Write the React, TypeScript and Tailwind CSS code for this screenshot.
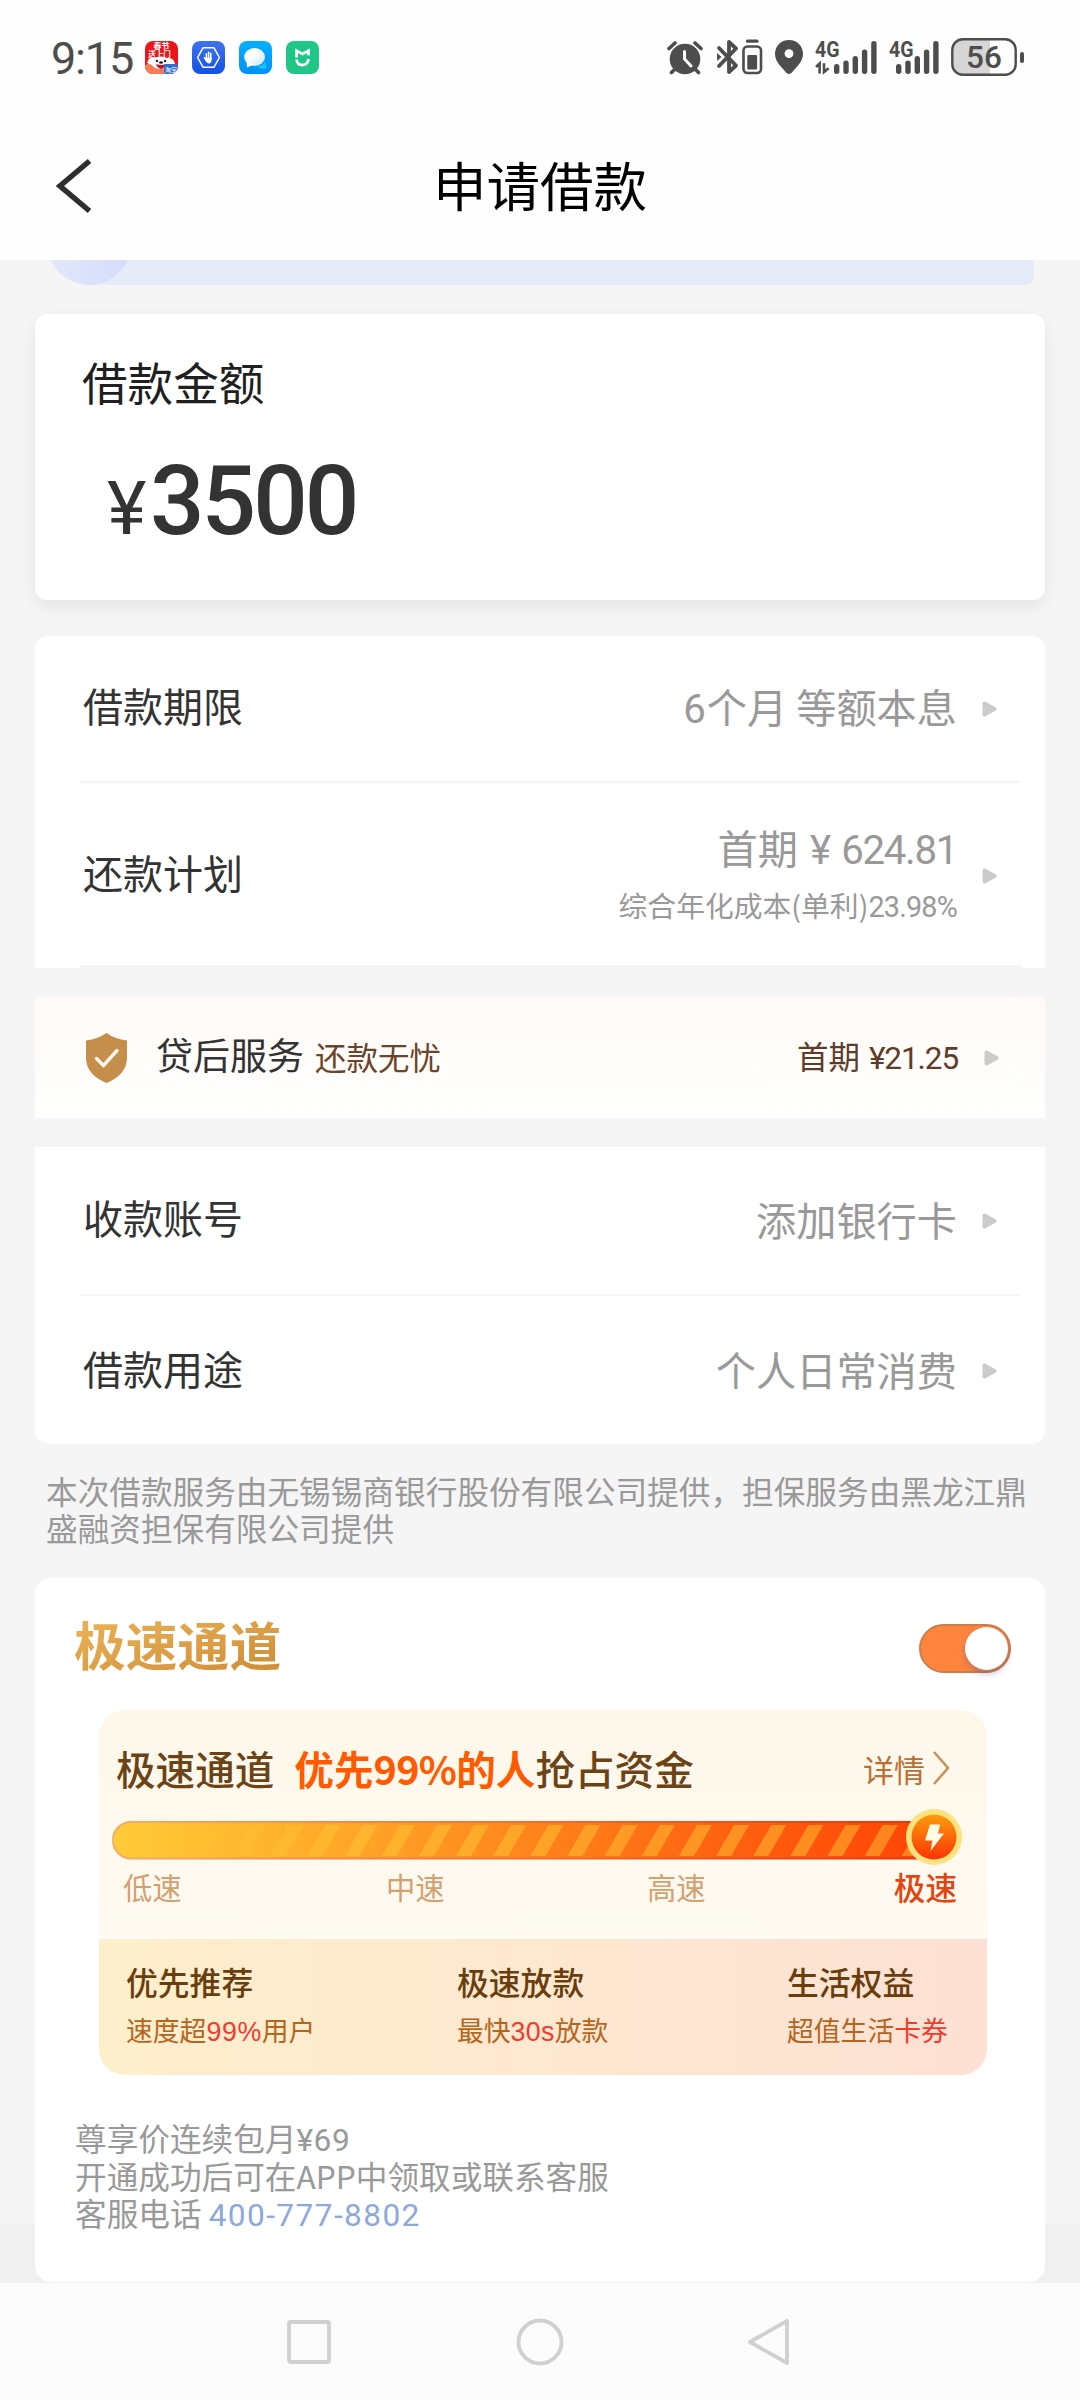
import type { ReactNode } from "react"

const DARK = "#4d4d4d"

function AppIcons() {
  return (
    <div className="flex gap-[14px]">
      <svg className="size-[33px] rounded-[8px]" viewBox="0 0 33 33">
        <rect width="33" height="33" fill="#ea1519" />
        <text x="16.5" y="8.4" fontSize="8" fontWeight="700" textAnchor="middle" fill="#fff">春节</text>
        <text x="14.5" y="15.6" fontSize="7.5" fontWeight="700" textAnchor="middle" fill="#fff">送上门</text>
        <path d="M0 24 Q10 20 20 27 L20 33 H0Z" fill="#f77b55" />
        <path d="M2 22 Q4 15 10 17 Q16 14 22 17 Q29 16 30 23 L26 24 Q23 28 16 28 Q9 28 7 24Z" fill="#fff" />
        <circle cx="12" cy="20" r="1.2" fill="#222" />
        <circle cx="20" cy="20" r="1.2" fill="#222" />
        <ellipse cx="16" cy="21.5" rx="2" ry="1.3" fill="#222" />
        <path d="M11 23 Q16 25 21 23 Q19 28 16 28 Q12 27 11 23Z" fill="#c8102a" />
        <rect x="19" y="23" width="14" height="10" rx="2" fill="#2f6fd0" />
        <text x="26" y="30.6" fontSize="6" textAnchor="middle" fill="#fff">淘宝</text>
      </svg>
      <svg className="size-[33px] rounded-[8px]" viewBox="0 0 33 33">
        <defs>
          <linearGradient id="guard" x1="0" y1="0" x2="0" y2="1">
            <stop offset="0" stopColor="#3f74ef" />
            <stop offset="1" stopColor="#1550e6" />
          </linearGradient>
        </defs>
        <rect width="33" height="33" fill="url(#guard)" />
        <path d="M11 6.8H22L27.4 16.5L22 26.2H11L5.6 16.5Z" fill="none" stroke="#fff" strokeWidth="1.5" strokeLinejoin="round" />
        <path d="M12.3 16.8 L15 20 M14.4 18V12.8 M16.6 18V11.4 M18.8 18V12.4" stroke="#fff" strokeWidth="1.6" strokeLinecap="round" />
        <path d="M13.6 17H19.6V19Q19.6 22.4 16.8 22.4Q15 22.4 13.2 19.6Z" fill="#fff" />
      </svg>
      <svg className="size-[33px] rounded-[8px]" viewBox="0 0 33 33">
        <defs>
          <linearGradient id="msg" x1="0" y1="0" x2="0" y2="1">
            <stop offset="0" stopColor="#05b0ff" />
            <stop offset="1" stopColor="#0091f7" />
          </linearGradient>
          <linearGradient id="bubble" x1="0" y1="0" x2="1" y2="1">
            <stop offset="0.4" stopColor="#fff" />
            <stop offset="1" stopColor="#bfe6ff" />
          </linearGradient>
        </defs>
        <rect width="33" height="33" fill="url(#msg)" />
        <path d="M18 25Q24 26 26 20L27.5 27.5H21Z" fill="#19c3f5" />
        <ellipse cx="15.6" cy="16" rx="10.4" ry="9" fill="url(#bubble)" />
        <path d="M7.5 20 L8 26.5 L14 24Z" fill="#fff" />
      </svg>
      <svg className="size-[33px] rounded-[8px]" viewBox="0 0 33 33">
        <rect width="33" height="33" fill="#1fc686" />
        <path d="M10.6 16.4V9.8L16.5 13L22.4 9.8V14.2" fill="none" stroke="#fff" strokeWidth="2.8" strokeLinejoin="miter" />
        <path d="M10.6 18.5Q11 24 16.5 24Q22 24 22.4 18" fill="none" stroke="#fff" strokeWidth="2.8" />
      </svg>
    </div>
  )
}

function Signal({ data }: { data?: boolean }) {
  const x = data ? [19, 28.3, 37.6, 46.9, 56.2] : [7, 16.3, 25.6, 34.9, 44.2]
  const h = [10, 13.5, 18, 24.5, 33]
  return (
    <svg width={data ? 62 : 50} height="34" viewBox={data ? "0 0 62 34" : "0 0 50 34"} className="overflow-visible font-['Roboto',sans-serif]">
      <text x="0" y="16.8" fontSize="22" fontWeight="700" textLength="24.5" lengthAdjust="spacingAndGlyphs" fill={DARK}>
        4G
      </text>
      {data && (
        <path d="M1 27L4.6 23.6V33.5M9 23.2V32L13.6 28.2" fill="none" stroke={DARK} strokeWidth="2.6" />
      )}
      {h.map((v, i) => (
        <rect key={i} x={x[i]} y={34 - v} width="5.4" height={v} rx="2.7" fill={DARK} />
      ))}
    </svg>
  )
}

function StatusBar() {
  return (
    <div className="flex h-[114px] items-center pr-[55px] pl-[51px]">
      <span className="mt-[2px] w-[94px] font-['Roboto',sans-serif] text-[45px] leading-none tracking-[-1.2px] text-[#4d4d4d]">
        9:15
      </span>
      <AppIcons />
      <div className="ml-auto flex items-center">
        <svg width="36" height="35" viewBox="0 0 36 35" className="mr-[12px]">
          <circle cx="18" cy="19" r="15.3" fill={DARK} />
          <path d="M2 8.5L8 3M34 8.5L28 3M8 29L4.5 32.5M28 29L31.5 32.5" stroke={DARK} strokeWidth="3.6" strokeLinecap="round" />
          <path d="M17.5 11.5V19L24 26" fill="none" stroke="#fff" strokeWidth="3" strokeLinecap="round" />
        </svg>
        <svg width="48" height="36" viewBox="0 0 48 36" className="mr-[12px]">
          <path d="M4 9L21 26.5L14 33V3L21 9.5L4 27" fill="none" stroke={DARK} strokeWidth="3.8" strokeLinejoin="round" strokeLinecap="round" />
          <path d="M2 14L6.5 18L2 22Z" fill={DARK} />
          <rect x="28.5" y="7.5" width="17.5" height="26.5" rx="4" fill="none" stroke={DARK} strokeWidth="2.6" />
          <rect x="32.3" y="16" width="9.8" height="14.5" rx="1" fill={DARK} />
          <path d="M32.5 2.2H42" stroke={DARK} strokeWidth="3.2" strokeLinecap="round" />
        </svg>
        <svg width="28" height="34" viewBox="0 0 28 34" className="mr-[12px]">
          <path d="M14 0C6 0 0 6 0 14C0 22 7 27 10.5 32Q14 36 17.5 32C21 27 28 22 28 14C28 6 22 0 14 0Z" fill={DARK} />
          <circle cx="14" cy="13.6" r="4.4" fill="#fff" />
        </svg>
        <div className="mr-[12px]"><Signal data /></div>
        <div className="mr-[12px]"><Signal /></div>
        <svg width="74" height="38" viewBox="0 0 74 38" className="overflow-visible font-['Roboto',sans-serif]">
          <path d="M12 2H39V36H12Q2 36 2 26V12Q2 2 12 2Z" fill="#d6d6d6" />
          <rect x="1.3" y="1.3" width="63.4" height="35.4" rx="10.5" fill="none" stroke={DARK} strokeWidth="2.4" />
          <rect x="69" y="14" width="4" height="11" rx="2" fill={DARK} />
          <text x="33" y="30.3" fontSize="31.5" fontWeight="500" textAnchor="middle" fill={DARK}>56</text>
        </svg>
      </div>
    </div>
  )
}

function Header() {
  return (
    <div className="-mt-px grid h-[146px] grid-cols-[1fr_auto_1fr] items-center">
      <svg width="36" height="56" viewBox="0 0 36 56" className="ml-[56px]">
        <path d="M33.5 3L4 28L33.5 53" fill="none" stroke="#2e2e2e" strokeWidth="5.4" />
      </svg>
      <h1 className="-mt-[5px] text-[53.5px] leading-none text-black">申请借款</h1>
    </div>
  )
}

function Arrow() {
  return (
    <svg width="15" height="16" viewBox="0 0 15 16">
      <path d="M2.5 2.5L12.5 8L2.5 13.5Z" fill="#cbcbcb" stroke="#cbcbcb" strokeWidth="4" strokeLinejoin="round" />
    </svg>
  )
}

function Row({ label, children, className }: { label: string; children: ReactNode; className: string }) {
  return (
    <div className={`ml-[45px] mr-[24px] flex items-center pl-[3px] pr-[24px] ${className}`}>
      <span className="-mt-[7px] text-[40px] leading-none text-[#333]">{label}</span>
      <div className="-mt-[3px] mr-[25px] ml-auto text-right text-[40.2px] leading-none text-[#999]">{children}</div>
      <Arrow />
    </div>
  )
}

function SpeedBar() {
  const stripes = Array.from({ length: 20 }, (_, i) => 102 + i * 37.15)
  return (
    <svg width="852" height="58" viewBox="0 0 852 58" className="block">
      <defs>
        <linearGradient id="speed" gradientUnits="userSpaceOnUse" x1="0" y1="0" x2="820" y2="0">
          <stop offset="0" stopColor="#ffcb38" />
          <stop offset="0.25" stopColor="#ffac2a" />
          <stop offset="0.5" stopColor="#ff861c" />
          <stop offset="0.75" stopColor="#ff6110" />
          <stop offset="1" stopColor="#ff4406" />
        </linearGradient>
        <linearGradient id="edge" gradientUnits="userSpaceOnUse" x1="0" y1="0" x2="820" y2="0">
          <stop offset="0" stopColor="#efae6b" />
          <stop offset="0.5" stopColor="#f07035" />
          <stop offset="1" stopColor="#e53409" />
        </linearGradient>
        <linearGradient id="stripe" gradientUnits="userSpaceOnUse" x1="0" y1="0" x2="820" y2="0">
          <stop offset="0.08" stopColor="#ffcc38" stopOpacity="0" />
          <stop offset="0.3" stopColor="#ffbd30" stopOpacity="0.7" />
          <stop offset="1" stopColor="#ff9322" stopOpacity="0.8" />
        </linearGradient>
        <linearGradient id="disc" x1="0" y1="0" x2="0" y2="1">
          <stop offset="0" stopColor="#fb9d0b" />
          <stop offset="1" stopColor="#fb3305" />
        </linearGradient>
      </defs>
      <rect x="1" y="14" width="830" height="36.5" rx="18" fill="url(#speed)" stroke="url(#edge)" strokeWidth="2" />
      {stripes.map((x) => (
        <path key={x} d={`M${x} 17H${x + 15}L${x - 3} 48H${x - 18}Z`} fill="url(#stripe)" />
      ))}
      <circle cx="822" cy="29" r="28" fill="#fee27e" />
      <circle cx="822" cy="29" r="22.5" fill="url(#disc)" />
      <path d="M818 16.5H828L826 25.5H832L818.5 43L820.5 32.5H813Z" fill="#fffbe6" />
    </svg>
  )
}

function Benefit({ title, children }: { title: string; children: ReactNode }) {
  return (
    <div>
      <p className="text-[31.8px] leading-[46px] font-medium text-[#6a3e0c]">{title}</p>
      <p className="mt-[3px] text-[26.8px] leading-[46px] text-[#b5651d]">{children}</p>
    </div>
  )
}

function PromoCard() {
  return (
    <div className="mt-[37px] mr-[58px] ml-[64px] h-[365px] overflow-hidden rounded-[26px] bg-[#fff9ed]">
      <div className="h-[229px] bg-linear-to-b from-[#fef7ea] to-[#fffaf2] pt-[37px] pl-[13px]">
        <div className="flex h-[42px] items-center pl-[4px] text-[39.6px] leading-none font-medium text-[#6b4315]">
          <span className="mr-[20px]">极速通道</span>
          <span className="font-bold text-[#ff5a00]">
            优先<span className="tracking-[-0.7px]">99%</span>的人
          </span>
          <span>抢占资金</span>
          <span className="mr-[7px] ml-auto text-[31px] font-normal text-[#bb6f30]">详情</span>
          <svg width="18" height="36" viewBox="0 0 18 36" className="mr-[37px]">
            <path d="M2 2L16 18L2 34" fill="none" stroke="#cb9157" strokeWidth="2.6" />
          </svg>
        </div>
        <div className="mt-[19px]">
          <SpeedBar />
        </div>
        <div className="mt-[5px] grid h-[32px] grid-cols-[263px_261px_1fr_auto] items-center pr-[30px] pl-[11px] text-[29.3px] leading-none text-[#d3a06f]">
          <span>低速</span>
          <span>中速</span>
          <span>高速</span>
          <span className="text-[31.6px] font-medium text-[#e2450f]">极速</span>
        </div>
      </div>
      <div className="grid h-[136px] grid-cols-[331px_330px_1fr] bg-linear-to-r from-[#feefcc] to-[#fde1d4] pt-[19px] pl-[27px]">
        <Benefit title="优先推荐">
          速度超<span className="font-['Liberation_Sans',sans-serif] tracking-[0.6px] text-[#f23b2f]">99%</span>用户
        </Benefit>
        <Benefit title="极速放款">
          最快<span className="font-['Liberation_Sans',sans-serif] tracking-[0.3px] text-[#f23b2f]">30s</span>放款
        </Benefit>
        <Benefit title="生活权益">
          超值生活<span className="text-[#f23b2f]">卡券</span>
        </Benefit>
      </div>
    </div>
  )
}

function NavBar() {
  return (
    <div className="flex h-[117px] items-center justify-center gap-[184px] bg-[#fcfcfc]">
      <svg width="46" height="48" viewBox="0 0 46 48" fill="none" stroke="#d0d0d0" strokeWidth="3.8">
        <rect x="3" y="4" width="40" height="40" rx="1.5" />
      </svg>
      <svg width="48" height="48" viewBox="0 0 48 48" fill="none" stroke="#d0d0d0" strokeWidth="3.8">
        <circle cx="24" cy="24" r="21.5" />
      </svg>
      <svg width="46" height="48" viewBox="0 0 46 48" fill="none" stroke="#d0d0d0" strokeWidth="3.8">
        <path d="M39 3V45L2 24Z" strokeLinejoin="round" />
      </svg>
    </div>
  )
}

export default function App() {
  return (
    <div className="h-[2400px] w-[1080px] overflow-hidden bg-[#f5f5f5] font-['Noto_Sans_CJK_SC',sans-serif]">
      <div className="h-[260px] bg-[#fefefe]">
        <StatusBar />
        <Header />
      </div>

      {/* bottom edge of the notice that scrolls under the header */}
      <div className="ml-[50px] flex h-[25px] w-[984px] justify-start overflow-hidden rounded-b-[8px] bg-linear-to-r from-transparent from-4% to-[#e6ebfa] to-4%">
        <div className="-mt-[59px] ml-[-3px] size-[84px] shrink-0 rounded-full bg-linear-to-r from-[#e3e9fb] to-[#d3dcfb]" />
      </div>

      <section className="mx-[35px] mt-[29px] h-[286px] rounded-[12px] bg-white pt-[44px] pl-[47px] shadow-[0_6px_18px_rgba(0,0,0,0.07)]">
        <h2 className="text-[45.6px] leading-[46px] text-[#1f1f1f]">借款金额</h2>
        <p className="mt-[47px] ml-[25px] flex items-baseline font-['Roboto',sans-serif] leading-[100px] text-[#333]">
          <span className="w-[43px] text-[75px]">¥</span>
          <span className="text-[96px] font-medium tracking-[-3px]">3500</span>
        </p>
      </section>

      <section className="mx-[35px] mt-[36px] h-[332px] rounded-t-[14px] bg-white">
        <Row label="借款期限" className="h-[147px] border-b-2 border-[#f5f5f5]">
          <p className="mt-[2px]">
            <span className="mr-[2px] font-['Roboto',sans-serif] leading-none tracking-[-1px]">6</span>个月 等额本息
          </p>
        </Row>
        <Row label="还款计划" className="h-[185px] border-b-3 border-[#f5f5f5] pt-[3px]">
          <p className="mt-[3px] leading-[58px]">
            首期
            <span className="ml-[12px] font-['Roboto',sans-serif] leading-none tracking-[-1.8px]">
              ¥<span className="ml-[12px] tracking-[-1.3px]">624.81</span>
            </span>
          </p>
          <p className="text-[28.8px] leading-[58px]">
            综合年化成本(单利)
            <span className="font-['Roboto',sans-serif] leading-none tracking-[-0.8px]">23.98%</span>
          </p>
        </Row>
      </section>

      <section className="mx-[35px] mt-[29px] flex h-[121px] items-center bg-linear-to-b from-[#fffaf7] to-[#fffffe] pr-[46px] pl-[51px] leading-none">
        <svg width="41" height="50" viewBox="0 0 41 50">
          <path d="M20.5 0Q29 6 41 7.5V26Q40 42 20.5 50Q1 42 0 26V7.5Q12 6 20.5 0Z" fill="#c58f4b" />
          <path d="M10.5 25.5L17.5 32.5L31 17.5" fill="none" stroke="#fff8ee" strokeWidth="3.4" strokeLinecap="round" />
        </svg>
        <span className="-mt-[6px] ml-[29px] text-[37px] text-[#333]">贷后服务</span>
        <span className="-mt-[2px] ml-[11px] text-[31.5px] text-[#6b4429]">还款无忧</span>
        <span className="mt-0 mr-[26px] ml-auto text-[31.5px] text-[#5f3c27]">
          首期
          <span className="ml-[9px] font-['Roboto',sans-serif] tracking-[-1.1px]">¥21.25</span>
        </span>
        <Arrow />
      </section>

      <section className="mx-[35px] mt-[29px] h-[297px] rounded-b-[14px] bg-white">
        <Row label="收款账号" className="h-[149px] border-b-2 border-[#f5f5f5]">
          添加银行卡
        </Row>
        <Row label="借款用途" className="h-[148px] pt-[2px]">
          个人日常消费
        </Row>
      </section>

      <p className="mt-[28px] ml-[46px] w-[990px] text-[31.65px] leading-[37px] text-[#999]">
        本次借款服务由无锡锡商银行股份有限公司提供，担保服务由黑龙江鼎盛融资担保有限公司提供
      </p>

      <div className="bg-[linear-gradient(#f5f5f5_678px,#f0f0f0_678px)] pt-[32px] pb-[1px]">
        <section className="mx-[35px] h-[704px] rounded-[16px] bg-white pt-[42px]">
          <div className="flex h-[53px] items-center justify-between pr-[34px] pl-[39px]">
            <h2 className="-mt-[5px] bg-linear-to-br from-[#ecb458] to-[#ce8c36] bg-clip-text text-[51.8px] leading-[60px] font-bold text-transparent">
              极速通道
            </h2>
            <div className="mt-[3px] flex h-[49px] w-[92px] items-center justify-end rounded-full border-2 border-[#cf7c48] bg-[#ff853f] pr-px">
              <div className="size-[43px] rounded-full bg-white shadow-[0_4px_6px_rgba(60,70,140,0.3)]" />
            </div>
          </div>
          <PromoCard />
          <p className="mt-[44px] ml-[40px] text-[31.65px] leading-[37px] text-[#999]">
            尊享价连续包月<span className="font-['Roboto',sans-serif] leading-none tracking-[0.5px]">¥69</span>
            <br />
            开通成功后可在APP中领取或联系客服
            <br />
            客服电话{" "}
            <span className="font-['Roboto',sans-serif] leading-none tracking-[1.4px] text-[#8ea8da]">400-777-8802</span>
          </p>
        </section>
      </div>
      <NavBar />
    </div>
  )
}
